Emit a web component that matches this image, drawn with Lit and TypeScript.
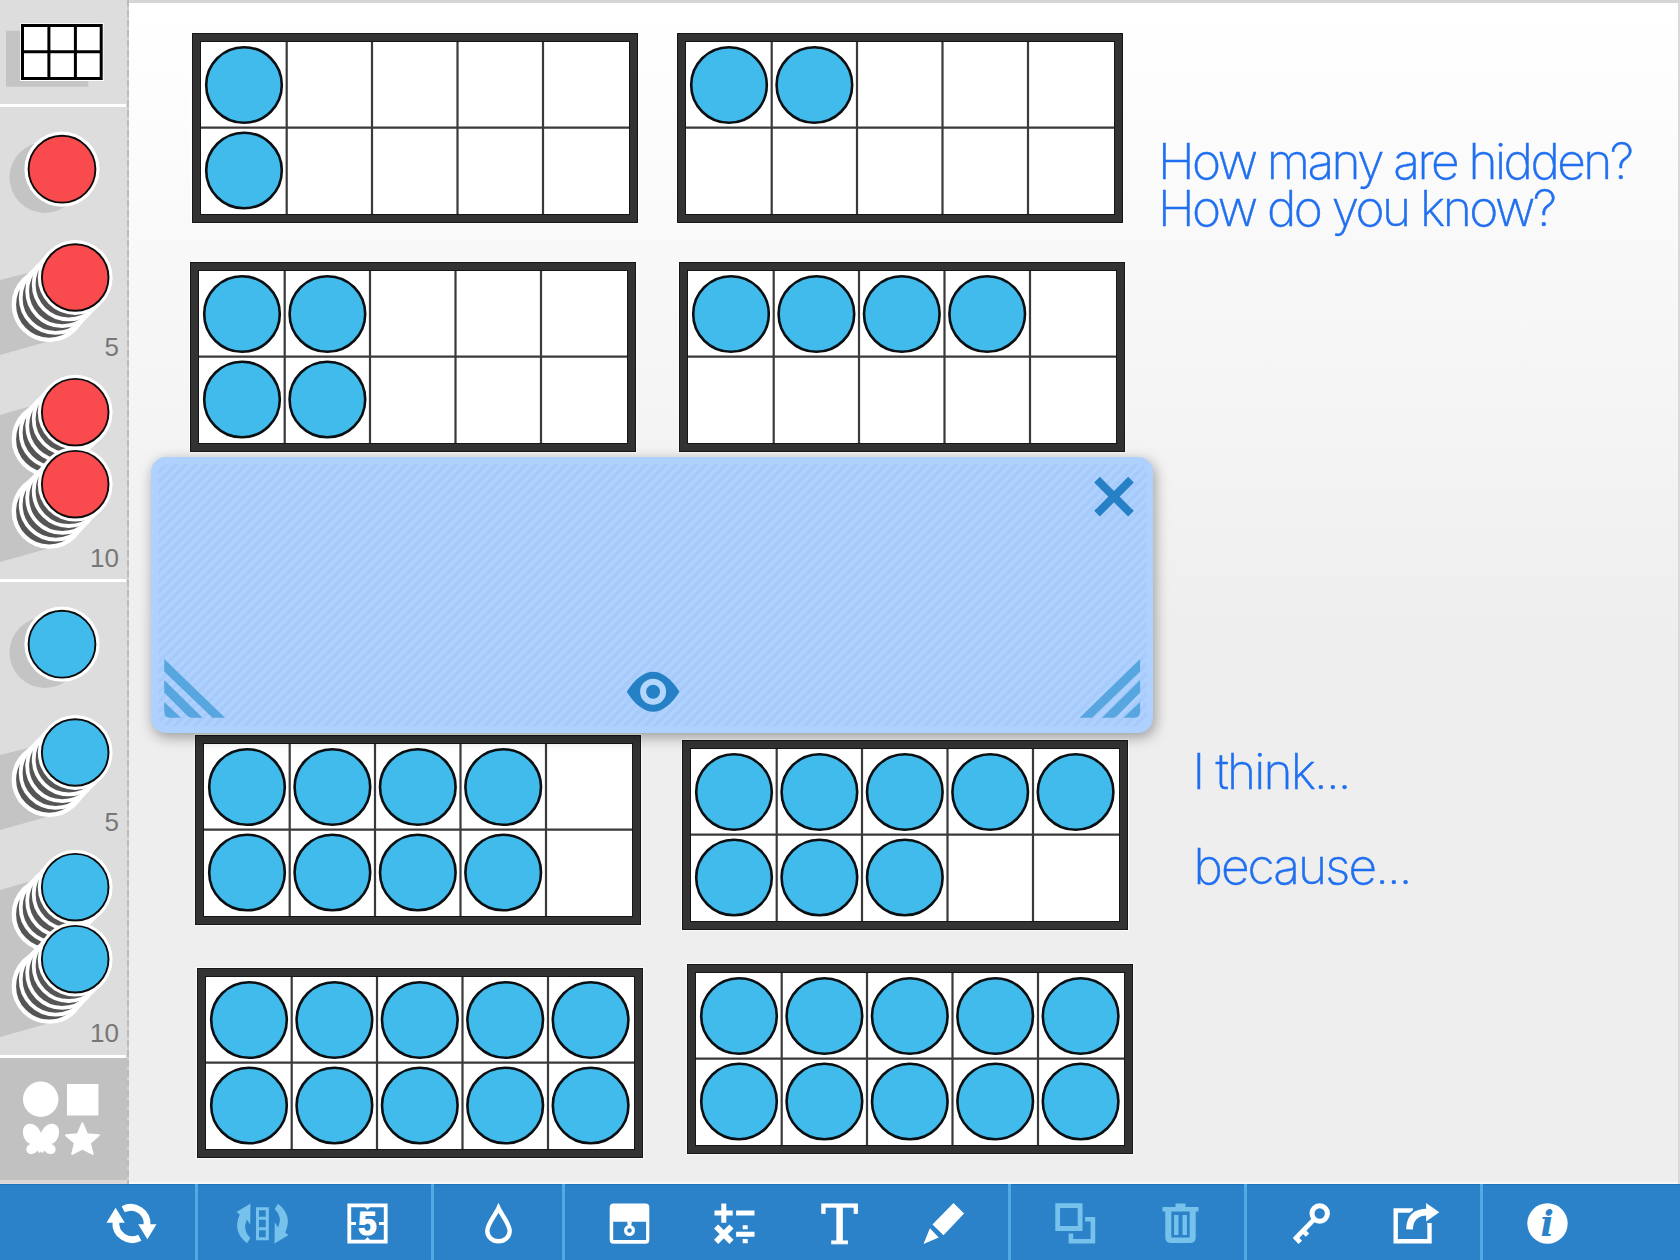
import { LitElement, html, svg, css } from "lit";
import { customElement, property } from "lit/decorators.js";

const RED = "#f94b4e";
const BLUE = "#40bbec";

@customElement("ten-frame")
class TenFrame extends LitElement {
  @property({ type: Array }) cells: number[] = [];

  static styles = css`
    :host {
      display: block;
      width: 446px;
      height: 190px;
    }
    svg {
      display: block;
      overflow: visible;
    }
  `;

  render() {
    return html`<svg width="446" height="190" viewBox="0 0 446 190">
      <rect x="-1" y="-1" width="448" height="192" fill="#fff" opacity="0.7" />
      <rect width="446" height="190" fill="#161616" />
      <rect x="1" y="1" width="444" height="188" fill="#333" />
      <rect x="8" y="8" width="430" height="174" fill="#161616" />
      <rect x="9" y="9" width="428" height="172" fill="#fff" />
      <path d="M94.7 9V181M180 9V181M265.500 9V181M351 9V181M9 94.700H437" stroke="#3a3a3a" stroke-width="2.200" />
      ${this.cells.map(
        (i) => svg`<circle cx=${52 + (i % 5) * 85.4} cy=${52 + Math.floor(i / 5) * 85.5} r="37.8"
          fill=${BLUE} stroke="#0b0f12" stroke-width="2.6" />`
      )}
    </svg>`;
  }
}

@customElement("chip-group")
class ChipGroup extends LitElement {
  @property() color = RED;

  static styles = css`
    :host {
      display: block;
    }
    svg {
      display: block;
    }
    .count {
      font: 26px "Liberation Sans", Arial, sans-serif;
      fill: #777;
      text-anchor: end;
    }
  `;

  private stack(cx: number, cy: number) {
    return svg`<circle cx=${cx - 26} cy=${cy + 27} r="37.6" fill="#fff" />
    ${[4, 3, 2, 1].map(
      (k) => svg`<circle cx=${cx - k * 6.5} cy=${cy + k * 6.8} r="35" fill="#555" stroke="#fff" stroke-width="3.8" />`
    )}
    <circle cx=${cx} cy=${cy} r="37.4" fill="#fff" />
    <circle cx=${cx} cy=${cy} r="33.3" fill=${this.color} stroke="#0c0c0c" stroke-width="1.9" />`;
  }

  render() {
    return html`<svg width="127" height="472" viewBox="0 106.5 127 472">
      <circle cx="45" cy="177" r="35.5" fill="#c4c4c4" />
      <circle cx="62" cy="168.7" r="37.6" fill="#fff" />
      <circle cx="62" cy="168.7" r="33.4" fill=${this.color} stroke="#0c0c0c" stroke-width="1.9" />
      <path d="M0 279.5L50 267L75 330L50 340.5L0 354.5Z" fill="#c4c4c4" />
      ${this.stack(75.2, 277)}
      <text class="count" x="119" y="355">5</text>
      <path d="M0 414.5L50 400L75 530L50 547.5L0 561.5Z" fill="#c4c4c4" />
      ${this.stack(75.2, 411.7)} ${this.stack(75.2, 483.7)}
      <text class="count" x="119" y="566.5">10</text>
    </svg>`;
  }
}

const cycleArc = svg`<path d="M-8.3 -14.2A16.4 16.4 0 0 1 15.6 2" fill="none" stroke="#fff" stroke-width="6.8" /><path d="M6.7 .7H25L15.9 15.8Z" />`;

const icons: Record<string, unknown> = {
  refresh: svg`${[0, 180].map(
    (a) => svg`<g transform="rotate(${a})"><path d="M-8.3 -14.2A16.4 16.4 0 0 1 15.6 2" fill="none" stroke="#fff" stroke-width="6.8" /><path d="M6.7 .7H25L15.9 15.8Z" /></g>`
  )}`,
  rotate: svg`${[0, 180].map(
    (a) => svg`<g transform="rotate(${a})"><path d="M-12 -20L-26 -11.5L-22.7 -9Q-30.5 8 -15.5 19.8L-12.2 14.5Q-20.5 6.5 -15.6 -4L-12.3 1.2Z" /></g>`
  )}
    <path d="M-5 -14.8H4.8V15.2H-5ZM-5 -5.2H4.8M-5 5.2H4.8" fill="none" stroke="#76c2ea" stroke-width="3" />`,
  five: svg`<path d="M-18.2 -18.2H18.2V18.2H-18.2Z" fill="none" stroke="#fff" stroke-width="3.8" />
    <path d="M-17 0H-11.5M17 0H11.5" stroke="#fff" stroke-width="3" />
    <path d="M-3 -17H3L0 -13.6ZM-3 17H3L0 13.6Z" />
    <text class="digit" x="0" y="11.8" text-anchor="middle">5</text>`,
  drop: svg`<path d="M0 -15.5C4 -7 11.2 .5 11.2 7.5A11.2 10.3 0 0 1 -11.2 7.5C-11.2 .5 -4 -7 0 -15.5Z" fill="none" stroke="#fff" stroke-width="4.4" />`,
  cover: svg`<path fill-rule="evenodd" d="M-16 -20H16Q19.8 -20 19.8 -16V16.2Q19.8 20.2 16 20.2H-16Q-19.8 20.2 -19.8 16.2V-16Q-19.8 -20 -16 -20ZM-16.3 -1.7V16.4H16.6V-1.7Z" />
    <path d="M-2.5 -2H2.5L1.5 3H-1.5Z" /><circle cx="0" cy="7" r="3.9" fill="none" stroke="#fff" stroke-width="3.2" />`,
  math: svg`<path d="M-13.2 -20H-8.2V-13H-1.8V-8H-8.2V-.8H-13.2V-8H-20V-13H-13.2ZM1.6 -13H20V-8H1.6ZM1.6 8.2H20V13.2H1.6ZM8.2 1.8H13.2V5.8H8.2ZM8.2 15.6H13.2V19.8H8.2Z" />
    <path d="M-18.4 3L-3 18.4M-3 3L-18.4 18.4" stroke="#fff" stroke-width="5.8" />`,
  text: svg`<text class="slab" x="0" y="20" text-anchor="middle">T</text>`,
  pen: svg`<path d="M9 -20.4L19.6 -10L-1 11.7L-12 1ZM-14.6 4.7L-5.8 14L-21 20.5Z" />`,
  copy: svg`<path d="M-17.8 -17.8H4.6V5H-17.8Z" fill="none" stroke="#76c2ea" stroke-width="4.8" />
    <path d="M9.6 -4.2H17.4V17.8H-4.6V10" fill="none" stroke="#76c2ea" stroke-width="4.6" />`,
  trash: svg`<path fill-rule="evenodd" d="M-5 -20H5V-16.6H18V-12H15.2V14Q15.2 19.5 9 19.5H-9Q-15.2 19.5 -15.2 14V-12H-18V-16.6H-5ZM-9.2 -12V14H9.2V-12Z" />
    <path d="M-6.4 -8.4H-2V11.6H-6.4ZM2 -8.4H6.4V11.6H2Z" />`,
  key: svg`<circle cx="8.2" cy="-10" r="7.7" fill="none" stroke="#fff" stroke-width="5" />
    <path d="M2.6 -4.2L-16.2 15.2M-17 12.8L-11.2 18.8M-9 6.6L-4 11.6" fill="none" stroke="#fff" stroke-width="4.8" />`,
  share: svg`<path d="M-3.6 -13H-20.8V17.8H13V-.5" fill="none" stroke="#fff" stroke-width="4.4" />
    <path d="M-7 5.5Q-6.5 -11.5 11 -11.5" fill="none" stroke="#2b82c9" stroke-width="11" />
    <path d="M-7 5.8Q-6.5 -11.3 11 -11.3" fill="none" stroke="#fff" stroke-width="6.8" /><path d="M9.6 -20.4L22.8 -11.3L9.6 -2Z" />`,
  info: svg`<circle r="20.2" /><text class="eye" x="-.4" y="12.6" text-anchor="middle">i</text>`,
};

const toolGroups: { cls: string; items: [string, boolean][] }[] = [
  { cls: "group first", items: [["refresh", true]] },
  { cls: "group", items: [["rotate", false], ["five", true]] },
  { cls: "group", items: [["drop", true]] },
  { cls: "group", items: [["cover", true], ["math", true], ["text", true], ["pen", true]] },
  { cls: "group", items: [["copy", false], ["trash", false]] },
  { cls: "group", items: [["key", true], ["share", true]] },
  { cls: "group last", items: [["info", true]] },
];

@customElement("tool-bar")
class ToolBar extends LitElement {
  static styles = css`
    :host {
      display: flex;
      height: 76px;
      background: #2b82c9;
      box-shadow: inset 0 1px 0 #2273b8;
    }
    .group {
      box-sizing: border-box;
      display: flex;
      padding: 0 11.5px 0 11.5px;
      border-right: 3px solid #53aae2;
    }
    .first {
      width: 198px;
      justify-content: flex-end;
    }
    .last {
      flex: 1;
      border-right: 0;
    }
    svg {
      display: block;
      width: 105px;
      height: 76px;
      fill: #fff;
    }
    .off {
      fill: #76c2ea;
    }
    .digit {
      font: bold 33px "Liberation Sans", Arial, sans-serif;
      stroke: #fff;
      stroke-width: 1.2px;
    }
    .slab {
      font: 55px "DejaVu Serif", serif;
      stroke: #fff;
      stroke-width: 0.8px;
    }
    .eye {
      font: italic bold 35px "DejaVu Serif", serif;
      fill: #2b82c9;
    }
  `;

  render() {
    return toolGroups.map(
      (g) => html`<div class=${g.cls}>
        ${g.items.map(
          ([name, on]) =>
            html`<svg class=${on ? "on" : "off"} viewBox="-52.5 -39.5 105 76">${icons[name]}</svg>`
        )}
      </div>`
    );
  }
}

const frames: { x: number; y: number; cells: number[] }[] = [
  { x: 192, y: 33, cells: [0, 5] },
  { x: 677.3, y: 33, cells: [0, 1] },
  { x: 190.4, y: 262.4, cells: [0, 1, 5, 6] },
  { x: 679.2, y: 262.4, cells: [0, 1, 2, 3] },
  { x: 195, y: 735, cells: [0, 1, 2, 3, 5, 6, 7, 8] },
  { x: 682.4, y: 739.5, cells: [0, 1, 2, 3, 4, 5, 6, 7] },
  { x: 196.6, y: 967.8, cells: [0, 1, 2, 3, 4, 5, 6, 7, 8, 9] },
  { x: 687.2, y: 964.3, cells: [0, 1, 2, 3, 4, 5, 6, 7, 8, 9] },
];

@customElement("app-root")
class AppRoot extends LitElement {
  static styles = css`
    :host {
      display: flex;
      flex-direction: column;
      width: 1680px;
      height: 1260px;
      overflow: hidden;
      background: #ddd;
      font-family: "Liberation Sans", Arial, sans-serif;
    }
    .main {
      display: flex;
      height: 1184px;
    }
    .side {
      box-sizing: border-box;
      width: 129px;
      display: flex;
      flex-direction: column;
      background: repeating-linear-gradient(180deg, #bcbcbc 0 7px, #d2d2d2 7px 10px) 127px 0 / 2px 100% no-repeat #ddd;
    }
    .side svg {
      display: block;
    }
    .section {
      width: 126.3px;
      border-bottom: 3px solid #fff;
      overflow: hidden;
    }
    .section.frames {
      height: 103.5px;
    }
    .section.chips {
      height: 472.8px;
    }
    .section.shapes {
      height: 121.5px;
      background: #c1c1c1;
      border-bottom-color: #dcd7d4;
      width: 127px;
    }
    .canvas {
      flex: 1;
      position: relative;
      border-top: 3px solid #d6d6d6;
      border-right: 2px solid #dadada;
      background: linear-gradient(180deg, #fff 0, #fdfdfd 90px, #eee 640px, #eee 100%);
      box-shadow: inset 0 -2px 0 #f8f8f8;
    }
    ten-frame {
      position: absolute;
    }
    .panel {
      position: absolute;
      left: 21.5px;
      top: 454px;
      width: 1002px;
      height: 275.5px;
      border-radius: 15px;
      background: #aed1ff;
      box-shadow: 2px 4px 14px rgba(0, 0, 0, 0.36);
    }
    .panel svg {
      display: block;
    }
    .note {
      position: absolute;
      left: 1020px;
      top: 120px;
    }
    .note text {
      font-family: Inter, "Liberation Sans", sans-serif;
      font-weight: 200;
      font-size: 49.6px;
      fill: #1f6ff0;
      stroke: #1f6ff0;
      stroke-width: 0.5px;
    }
  `;

  render() {
    return html`
      <div class="main">
        <div class="side">
          <div class="section frames">
            <svg width="127" height="103">
              <path d="M6 30.7H88.3V86.7H6Z" fill="#c4c4c4" />
              <path d="M20.2 23.3H103.6V81H20.2Z" fill="#fff" />
              <path d="M22.5 25.6H101.2V78.6H22.5ZM48.9 25V79M75.4 25V79M22 51.8H102" fill="#fff" stroke="#000" stroke-width="3" />
            </svg>
          </div>
          <div class="section chips"><chip-group .color=${RED}></chip-group></div>
          <div class="section chips"><chip-group .color=${BLUE}></chip-group></div>
          <div class="section shapes">
            <svg width="127" height="122" viewBox="0 1058.1 127 122" fill="#fff">
              <circle cx="40.7" cy="1099.3" r="17.7" />
              <path d="M67 1084H98.4V1115.5H67Z" />
              <path d="M41 1133C44 1126 49 1123 54 1124C60 1126 60 1133 57.5 1138.500C56 1142 53 1143.500 51 1144C56 1145 56.500 1150 54.500 1152.500C51.500 1155.500 47 1154 44.500 1150.500C43 1153.500 41.800 1153.500 41 1151C40.200 1153.500 39 1153.500 37.500 1150.500C35 1154 30.500 1155.500 27.500 1152.500C25.500 1150 26 1145 31 1144C29 1143.500 26 1142 24.500 1138.500C22 1133 22 1126 28 1124C33 1123 38 1126 41 1133Z" />
              <path d="M82.400 1123.500L87 1134.300L98.800 1135.400L89.900 1143.200L92.600 1154L82.400 1148.700L72.200 1154L74.900 1143.200L66 1135.400L77.800 1134.300Z" stroke="#fff" stroke-width="2" stroke-linejoin="round" />
            </svg>
          </div>
        </div>
        <div class="canvas">
          ${frames.map(
            (f) => html`<ten-frame style="left:${f.x - 129}px;top:${f.y - 3}px" .cells=${f.cells}></ten-frame>`
          )}
          <div class="panel">
            <svg width="1002" height="275" viewBox="150.5 457 1002 275">
              <defs>
                <pattern id="hatch" width="10" height="10" patternUnits="userSpaceOnUse">
                  <path d="M-2.500 2.500L2.500 -2.500M0 10L10 0M7.500 12.500L12.500 7.500" stroke="#a6caf9" stroke-width="3.500" />
                </pattern>
              </defs>
              <rect x="158" y="464" width="988" height="262" rx="9" fill="url(#hatch)" />
              <path d="M1096.500 479.700L1130.500 513.700M1130.500 479.700L1096.500 513.700" stroke="#2680c6" stroke-width="8" />
              <path d="M626.300 691.700C634 679 644 671.800 652.600 671.800C661.500 671.800 671 679 679 691.700C671 704.500 661.500 711.700 652.600 711.700C644 711.700 634 704.500 626.300 691.700Z" fill="#2680c6" />
              <circle cx="652.600" cy="691.700" r="10" fill="none" stroke="#b3d6fd" stroke-width="6" />
              <g fill="#57a6df">
                <path d="M163.700 659L224.500 717.800H212L163.700 671.500Z" />
                <path d="M163.700 680L202 717.800H191Q189 717.800 187 716L163.700 692.500Z" />
                <path d="M163.700 702L180.500 717.800H170Q163.700 717.800 163.700 711.500Z" />
                <path d="M1139.600 659L1079.200 717.800H1091.500L1139.600 671.500Z" />
                <path d="M1139.600 680L1101.500 717.800H1112.500Q1114.500 717.800 1116.500 716L1139.600 692.500Z" />
                <path d="M1139.600 702L1123 717.800H1133.500Q1139.600 717.800 1139.600 711.500Z" />
              </g>
            </svg>
          </div>
          <svg class="note" width="520" height="800" viewBox="1149 123 520 800">
            <text x="1158" y="179" textLength="476">How many are hidden?</text>
            <text x="1158" y="226.400" textLength="399">How do you know?</text>
            <text x="1192.500" y="789" textLength="159">I think...</text>
            <text x="1193.500" y="884" textLength="219">because...</text>
          </svg>
        </div>
      </div>
      <tool-bar></tool-bar>
    `;
  }
}
